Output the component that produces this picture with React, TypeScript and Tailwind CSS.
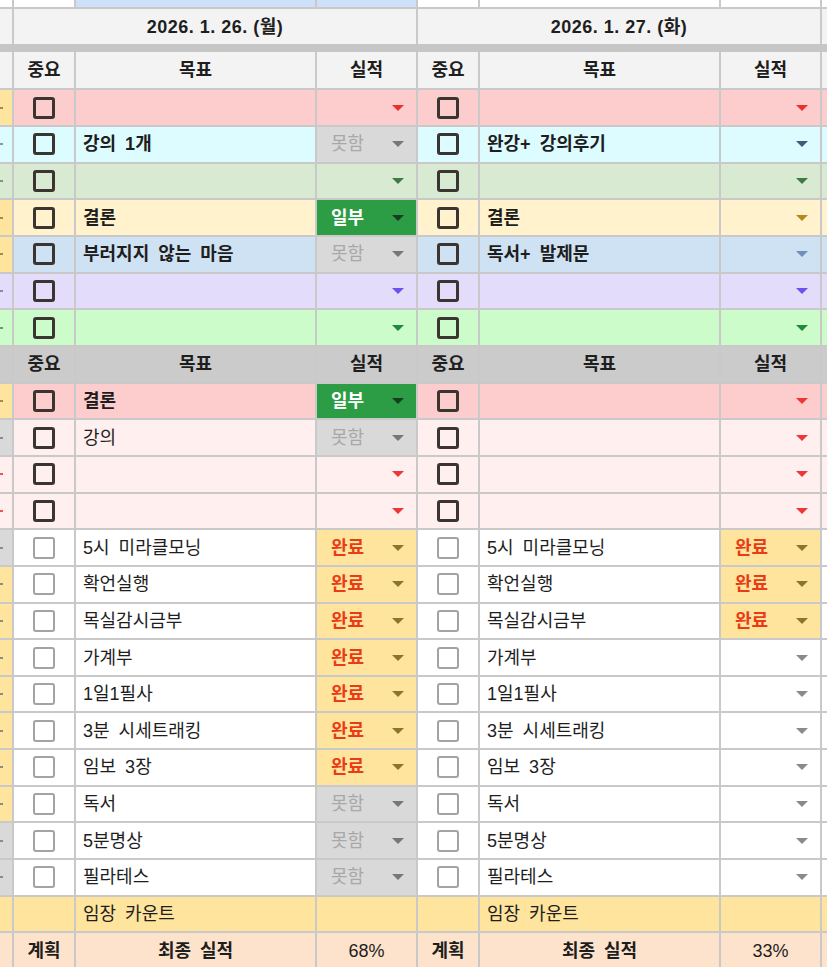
import React from 'react';

type Status = '' | '못함' | '일부' | '완료';
type Side = { text?: string; bold?: boolean; status?: Status };
type RowDef = {
  bg: string;
  arrow: string;
  sl: string;
  sr: string;
  mark: string;
  dark: boolean;
  l: Side;
  r: Side;
};

const B = 'border-r-2 border-b-2 border-[#c9c9c9]';

const AMBER = 'bg-[#fee49d]';
const GREY = 'bg-[#d9d9d9]';

const topRows: RowDef[] = [
  { bg: 'bg-[#fdcdcd]', arrow: 'text-[#e8322f]', sl: AMBER, sr: 'bg-[#fdcdcd]', mark: 'bg-[#a08a50]', dark: true, l: {}, r: {} },
  { bg: 'bg-[#ddfcff]', arrow: 'text-[#3d5c7c]', sl: 'bg-[#ddfcff]', sr: 'bg-[#ddfcff]', mark: 'bg-[#8a9aa0]', dark: true, l: { text: '강의 1개', bold: true, status: '못함' }, r: { text: '완강+ 강의후기', bold: true } },
  { bg: 'bg-[#d9ead3]', arrow: 'text-[#3f7a42]', sl: 'bg-[#d9ead3]', sr: 'bg-[#d9ead3]', mark: 'bg-[#7f957f]', dark: true, l: {}, r: {} },
  { bg: 'bg-[#fff2cc]', arrow: 'text-[#b48a1c]', sl: AMBER, sr: 'bg-[#fff2cc]', mark: 'bg-[#a08a50]', dark: true, l: { text: '결론', bold: true, status: '일부' }, r: { text: '결론', bold: true } },
  { bg: 'bg-[#cfe2f3]', arrow: 'text-[#6c90b8]', sl: AMBER, sr: 'bg-[#cfe2f3]', mark: 'bg-[#a08a50]', dark: true, l: { text: '부러지지 않는 마음', bold: true, status: '못함' }, r: { text: '독서+ 발제문', bold: true } },
  { bg: 'bg-[#e4dcfb]', arrow: 'text-[#6a52ea]', sl: 'bg-[#e4dcfb]', sr: 'bg-[#e4dcfb]', mark: 'bg-[#8f86b0]', dark: true, l: {}, r: {} },
  { bg: 'bg-[#cdfccb]', arrow: 'text-[#1f8a3b]', sl: 'bg-[#cdfccb]', sr: 'bg-[#cdfccb]', mark: 'bg-[#6f9a6f]', dark: true, l: {}, r: {} },
];

const midRows: RowDef[] = [
  { bg: 'bg-[#fdcdcd]', arrow: 'text-[#ee3737]', sl: AMBER, sr: 'bg-[#fdcdcd]', mark: 'bg-[#a08a50]', dark: true, l: { text: '결론', bold: true, status: '일부' }, r: {} },
  { bg: 'bg-[#ffefef]', arrow: 'text-[#ee3737]', sl: GREY, sr: 'bg-[#ffefef]', mark: 'bg-[#8a8a8a]', dark: true, l: { text: '강의', bold: false, status: '못함' }, r: {} },
  { bg: 'bg-[#ffefef]', arrow: 'text-[#ee3737]', sl: 'bg-[#ffefef]', sr: 'bg-[#ffefef]', mark: 'bg-[#ee5555]', dark: true, l: {}, r: {} },
  { bg: 'bg-[#ffefef]', arrow: 'text-[#ee3737]', sl: 'bg-[#ffefef]', sr: 'bg-[#ffefef]', mark: 'bg-[#ee5555]', dark: true, l: {}, r: {} },
];

const routineNames = ['5시 미라클모닝', '확언실행', '목실감시금부', '가계부', '1일1필사', '3분 시세트래킹', '임보 3장', '독서', '5분명상', '필라테스'];

const routineRows: RowDef[] = routineNames.map((name, i) => ({
  bg: 'bg-white',
  arrow: 'text-[#8a8a8a]',
  sl: i === 0 || i >= 8 ? GREY : AMBER,
  sr: 'bg-white',
  mark: 'bg-[#8a8a8a]',
  dark: false,
  l: { text: name, bold: false, status: i < 7 ? '완료' : '못함' },
  r: { text: name, bold: false, status: i < 3 ? '완료' : '' },
}));

function Arrow({ cls }: { cls: string }) {
  return (
    <svg width="12" height="6" viewBox="0 0 12 6" className={`shrink-0 ${cls}`}>
      <path d="M0 0H12L6 6Z" fill="currentColor" />
    </svg>
  );
}

function Box({ dark }: { dark: boolean }) {
  return dark ? (
    <div className="w-[22px] h-[22px] rounded-[3px] border-[3px] border-[#3a3531]" />
  ) : (
    <div className="w-[22px] h-[22px] rounded-[3px] border-[2.5px] border-[#a3a3a3]" />
  );
}

function StatusCell({ side, row }: { side: Side; row: RowDef }) {
  const st = side.status ?? '';
  let bg = row.bg;
  let arrow = row.arrow;
  let txt = '';
  if (st === '못함') {
    bg = 'bg-[#d9d9d9]';
    arrow = 'text-[#777777]';
    txt = 'text-[#a8a8a8]';
  } else if (st === '일부') {
    bg = 'bg-[#2c9c45]';
    arrow = 'text-[#173d20]';
    txt = 'text-white font-bold';
  } else if (st === '완료') {
    bg = 'bg-[#fee49d]';
    arrow = 'text-[#8b7628]';
    txt = 'text-[#ea3b17] font-bold';
  }
  return (
    <div className={`w-[101px] shrink-0 ${B} ${bg} flex items-center justify-between pl-[14px] pr-[12px]`}>
      <span className={txt}>{st}</span>
      <Arrow cls={arrow} />
    </div>
  );
}

function DayCells({ side, row }: { side: Side; row: RowDef }) {
  return (
    <>
      <div className={`w-[62px] shrink-0 ${B} ${row.bg} flex items-center justify-center`}>
        <Box dark={row.dark} />
      </div>
      <div className={`w-[241px] shrink-0 ${B} ${row.bg} flex items-center pl-[7px] whitespace-nowrap [word-spacing:4px] ${side.bold ? 'font-bold' : ''}`}>
        {side.text}
      </div>
      <StatusCell side={side} row={row} />
    </>
  );
}

function DataRow({ row }: { row: RowDef }) {
  return (
    <div className="flex h-[36.667px]">
      <div className={`w-[14px] shrink-0 ${B} ${row.sl} flex items-center`}>
        <div className={`w-[3px] h-[2px] ${row.mark}`} />
      </div>
      <DayCells side={row.l} row={row} />
      <DayCells side={row.r} row={row} />
      <div className={`flex-1 border-b-2 border-[#c9c9c9] ${row.sr}`} />
    </div>
  );
}

function HeaderRow({ bg, h }: { bg: string; h: string }) {
  const day = (
    <>
      <div className={`w-[62px] shrink-0 ${B} ${bg} flex items-center justify-center font-bold`}>중요</div>
      <div className={`w-[241px] shrink-0 ${B} ${bg} flex items-center justify-center font-bold`}>목표</div>
      <div className={`w-[101px] shrink-0 ${B} ${bg} flex items-center justify-center font-bold`}>실적</div>
    </>
  );
  return (
    <div className={`flex ${h}`}>
      <div className={`w-[14px] shrink-0 ${B} ${bg}`} />
      {day}
      {day}
      <div className={`flex-1 border-b-2 border-[#c9c9c9] ${bg}`} />
    </div>
  );
}

export default function App() {
  return (
    <div className="w-[827px] h-[967px] overflow-hidden bg-white text-[#1e1e1e] text-[18px] leading-none font-['Liberation_Sans','Noto_Sans_CJK_KR',sans-serif]">
      {/* partial top row */}
      <div className="flex h-[9px]">
        <div className={`w-[14px] shrink-0 ${B} bg-white`} />
        <div className={`w-[62px] shrink-0 ${B} bg-white`} />
        <div className={`w-[241px] shrink-0 ${B} bg-[#cfe0fb]`} />
        <div className={`w-[101px] shrink-0 ${B} bg-[#cfe0fb]`} />
        <div className={`w-[62px] shrink-0 ${B} bg-white`} />
        <div className={`w-[241px] shrink-0 ${B} bg-white`} />
        <div className={`w-[101px] shrink-0 ${B} bg-white`} />
        <div className="flex-1 border-b-2 border-[#c9c9c9] bg-white" />
      </div>
      {/* date row */}
      <div className="flex h-[35px]">
        <div className="w-[14px] shrink-0 border-r-2 border-[#c9c9c9] bg-[#f3f3f3]" />
        <div className="w-[404px] shrink-0 border-r-2 border-[#c9c9c9] bg-[#f3f3f3] flex items-center justify-center font-bold tracking-[0.5px]">
          2026. 1. 26. (월)
        </div>
        <div className="w-[404px] shrink-0 border-r-2 border-[#c9c9c9] bg-[#f3f3f3] flex items-center justify-center font-bold tracking-[0.5px]">
          2026. 1. 27. (화)
        </div>
        <div className="flex-1 bg-[#f3f3f3]" />
      </div>
      <div className="h-[8px] bg-[#c6c6c6]" />
      <HeaderRow bg="bg-[#f3f3f3]" h="h-[38.333px]" />
      {topRows.map((r, i) => (
        <DataRow key={`t${i}`} row={r} />
      ))}
      <HeaderRow bg="bg-[#cbcbcb]" h="h-[36.667px]" />
      {midRows.map((r, i) => (
        <DataRow key={`m${i}`} row={r} />
      ))}
      {routineRows.map((r, i) => (
        <DataRow key={`r${i}`} row={r} />
      ))}
      {/* 임장 카운트 */}
      <div className="flex h-[36.667px]">
        <div className={`w-[14px] shrink-0 ${B} ${AMBER}`} />
        <div className={`w-[62px] shrink-0 ${B} ${AMBER}`} />
        <div className={`w-[241px] shrink-0 ${B} ${AMBER} flex items-center pl-[7px] [word-spacing:4px]`}>임장 카운트</div>
        <div className={`w-[101px] shrink-0 ${B} ${AMBER}`} />
        <div className={`w-[62px] shrink-0 ${B} ${AMBER}`} />
        <div className={`w-[241px] shrink-0 ${B} ${AMBER} flex items-center pl-[7px] [word-spacing:4px]`}>임장 카운트</div>
        <div className={`w-[101px] shrink-0 ${B} ${AMBER}`} />
        <div className={`flex-1 border-b-2 border-[#c9c9c9] ${AMBER}`} />
      </div>
      {/* 계획 row */}
      <div className="flex h-[36.667px]">
        <div className={`w-[14px] shrink-0 ${B} bg-[#fde3cc]`} />
        <div className={`w-[62px] shrink-0 ${B} bg-[#fde3cc] flex items-center justify-center font-bold`}>계획</div>
        <div className={`w-[241px] shrink-0 ${B} bg-[#fde3cc] flex items-center justify-center font-bold [word-spacing:4px]`}>최종 실적</div>
        <div className={`w-[101px] shrink-0 ${B} bg-[#fde3cc] flex items-center justify-center`}>68%</div>
        <div className={`w-[62px] shrink-0 ${B} bg-[#fde3cc] flex items-center justify-center font-bold`}>계획</div>
        <div className={`w-[241px] shrink-0 ${B} bg-[#fde3cc] flex items-center justify-center font-bold [word-spacing:4px]`}>최종 실적</div>
        <div className={`w-[101px] shrink-0 ${B} bg-[#fde3cc] flex items-center justify-center`}>33%</div>
        <div className="flex-1 border-b-2 border-[#c9c9c9] bg-[#fde3cc]" />
      </div>
    </div>
  );
}
